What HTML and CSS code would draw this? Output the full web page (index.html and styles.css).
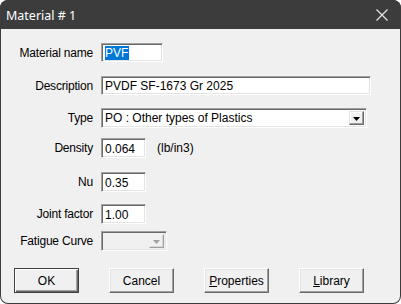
FILE: index.html
```html
<!DOCTYPE html>
<html>
<head>
<meta charset="utf-8">
<link rel="stylesheet" href="styles.css">
</head>
<body>
<div class="window">
  <div class="titlebar">
    <span class="title">Material # 1</span>
    <svg class="close" width="12" height="12" viewBox="0 0 12 12"><path d="M0.5 0.5 L11.5 11.5 M11.5 0.5 L0.5 11.5" stroke="#e6e6e6" stroke-width="1.2" fill="none"/></svg>
  </div>
  <div class="client">
    <div class="form">
      <div class="row r-name">
        <span class="label">Material name</span>
        <div class="field w-name"><span class="sel">PVF</span></div>
      </div>
      <div class="row r-desc">
        <span class="label">Description</span>
        <div class="field w-desc">PVDF SF-1673 Gr 2025</div>
      </div>
      <div class="row r-type">
        <span class="label">Type</span>
        <div class="field combo w-type">
          <span class="ctext">PO : Other types of Plastics</span>
          <span class="dbtn"><svg width="7" height="4" viewBox="0 0 7 4"><path d="M0 0 H7 L3.5 4 Z" fill="#000"/></svg></span>
        </div>
      </div>
      <div class="row r-dens">
        <span class="label">Density</span>
        <div class="field w-num">0.064</div>
        <span class="unit">(lb/in3)</span>
      </div>
      <div class="row r-nu">
        <span class="label">Nu</span>
        <div class="field w-num">0.35</div>
      </div>
      <div class="row r-joint">
        <span class="label">Joint factor</span>
        <div class="field w-num">1.00</div>
      </div>
      <div class="row r-fat">
        <span class="label">Fatigue Curve</span>
        <div class="field combo disabled w-fat">
          <span class="ctext"></span>
          <span class="dbtn"><svg width="7" height="4" viewBox="0 0 7 4"><path d="M0 0 H7 L3.5 4 Z" fill="#a0a0a0"/></svg></span>
        </div>
      </div>
    </div>
    <div class="buttons">
      <div class="btn default">OK</div>
      <div class="btn">Cancel</div>
      <div class="btn"><u>P</u>roperties</div>
      <div class="btn"><u>L</u>ibrary</div>
    </div>
  </div>
</div>
</body>
</html>
```
FILE: styles.css
```css
html, body {
  margin: 0;
  padding: 0;
  background: #ffffff;
}
body {
  width: 401px;
  height: 304px;
  overflow: hidden;
}
.window {
  width: 401px;
  height: 304px;
  box-sizing: border-box;
  background: #3c3c3c;
  border-radius: 8px;
  overflow: hidden;
  display: flex;
  flex-direction: column;
}
.titlebar {
  height: 29px;
  flex: none;
  display: flex;
  align-items: center;
  justify-content: space-between;
  padding: 0 13px 0 6px;
  box-sizing: border-box;
  background: #3c3c3c;
}
.title {
  font-family: "Noto Sans", "Open Sans", sans-serif;
  font-size: 12.5px;
  color: #ffffff;
  margin-top: 1px;
}
.close {
  display: block;
}
.client {
  flex: 1;
  margin: 0 1px 1px 1px;
  background: #f0f0f0;
  border-radius: 0 0 7px 7px;
  font-family: "Liberation Sans", Arial, sans-serif;
  font-size: 12px;
  color: #000;
  display: flex;
  flex-direction: column;
}
.form {
  display: flex;
  flex-direction: column;
}
.row {
  display: flex;
  align-items: center;
}
.label {
  width: 92px;
  flex: none;
  text-align: right;
  margin-right: 8px;
  white-space: nowrap;
  letter-spacing: -0.2px;
}
.r-name { margin-top: 14px; }
.r-desc { margin-top: 14px; }
.r-type { margin-top: 13px; }
.r-dens { margin-top: 10px; }
.r-nu { margin-top: 14px; }
.r-joint { margin-top: 12px; }
.r-fat { margin-top: 7px; }

.field {
  height: 19px;
  box-sizing: border-box;
  background: #ffffff;
  border: 1px solid;
  border-color: #a0a0a0 #ffffff #ffffff #a0a0a0;
  box-shadow: inset 1px 1px 0 #696969, inset -1px -1px 0 #e3e3e3;
  padding: 1px 0 0 3px;
  line-height: 17px;
  white-space: nowrap;
  overflow: hidden;
}
.w-name { width: 62px; }
.w-desc { width: 270px; }
.w-type { width: 266px; height: 20px; }
.w-num { width: 45px; height: 20px; line-height: 18px; }
.w-fat { width: 66px; height: 20px; }
.sel {
  background: #0078d7;
  color: #ffffff;
  padding: 0 1px 0 0;
  line-height: 14px;
  display: inline-block;
}
.unit {
  margin-left: 11px;
}
.combo {
  display: flex;
  align-items: stretch;
  padding: 2px 2px 2px 3px;
  line-height: 15px;
}
.combo .ctext {
  flex: 1;
}
.combo.disabled {
  background: #f0f0f0;
}
.dbtn {
  width: 15px;
  flex: none;
  box-sizing: border-box;
  background: #f0f0f0;
  border: 1px solid;
  border-color: #e3e3e3 #696969 #696969 #e3e3e3;
  box-shadow: inset -1px -1px 0 #a0a0a0, inset 1px 1px 0 #ffffff;
  display: flex;
  align-items: center;
  justify-content: center;
}
.dbtn svg { display: block; margin-top: 1px; }
.disabled .dbtn {
  border-color: #f0f0f0 #a0a0a0 #a0a0a0 #f0f0f0;
  box-shadow: inset -1px -1px 0 #d8d8d8;
}

.buttons {
  display: flex;
  margin-top: 17px;
  padding-left: 13px;
  gap: 30px;
}
.btn {
  width: 65px;
  height: 25px;
  box-sizing: border-box;
  background: #f0f0f0;
  border: 1px solid;
  border-color: #ffffff #696969 #696969 #ffffff;
  box-shadow: inset -1px -1px 0 #a0a0a0, inset 1px 1px 0 #e3e3e3;
  display: flex;
  align-items: center;
  justify-content: center;
  padding-top: 1px;
}
.btn.default {
  border: 1px solid #404040;
  box-shadow: inset 1px 1px 0 #ffffff, inset -1px -1px 0 #696969, inset -2px -2px 0 #a0a0a0;
}
```
